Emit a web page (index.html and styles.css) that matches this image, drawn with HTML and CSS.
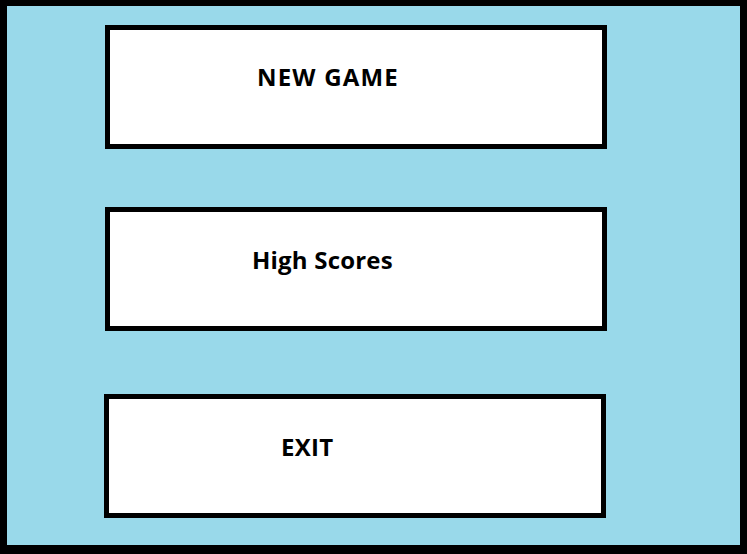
FILE: index.html
```html
<!DOCTYPE html>
<html>
<head>
<meta charset="utf-8">
<link rel="stylesheet" href="styles.css">
</head>
<body>
<div class="frame">
  <div class="menu">
    <div class="btn btn-new"><span class="label">NEW GAME</span></div>
    <div class="btn btn-scores"><span class="label">High Scores</span></div>
    <div class="btn btn-exit"><span class="label">EXIT</span></div>
  </div>
</div>
</body>
</html>
```

FILE: styles.css
```css
html, body {
  margin: 0;
  padding: 0;
  background: #000;
}
.frame {
  box-sizing: border-box;
  width: 747px;
  height: 554px;
  background: #99d9ea;
  border-style: solid;
  border-color: #000;
  border-width: 6px 7px 9px 7px;
}
.menu {
  display: flex;
  flex-direction: column;
  align-items: flex-start;
}
.btn {
  box-sizing: border-box;
  width: 502px;
  height: 124px;
  background: #fff;
  border: 5px solid #000;
  display: flex;
  align-items: flex-start;
}
.label {
  font-family: "Open Sans", "Liberation Sans", sans-serif;
  font-weight: 700;
  font-size: 24px;
  line-height: 30px;
  color: #000;
  white-space: nowrap;
}
.btn-new {
  margin: 19px 0 0 98px;
  padding: 32px 0 0 147px;
}
.btn-new .label {
  letter-spacing: 1.2px;
}
.btn-scores {
  margin: 58px 0 0 98px;
  padding: 33px 0 0 142px;
}
.btn-scores .label {
  letter-spacing: 0.2px;
}
.btn-exit {
  margin: 63px 0 0 97px;
  padding: 33px 0 0 172px;
}
.btn-exit .label {
  letter-spacing: 0.3px;
}
```
